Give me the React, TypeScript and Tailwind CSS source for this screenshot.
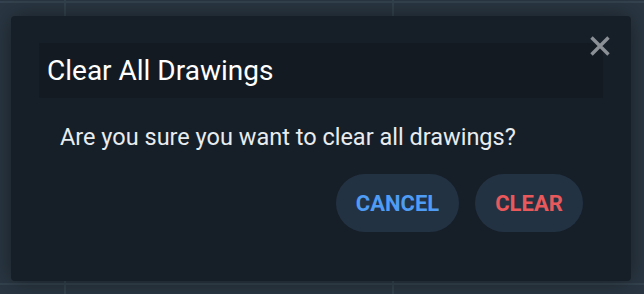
import React from "react";

export default function App() {
  return (
    <div
      className="relative w-[644px] h-[294px] overflow-hidden bg-[#2a3743]"
      style={{ fontFamily: "Roboto, 'Liberation Sans', sans-serif" }}
    >
      {/* background chart grid */}
      <div className="absolute inset-0 bg-[linear-gradient(to_right,transparent_64px,#34434f_64px,#34434f_66px,transparent_66px,transparent_392px,#34434f_392px,#34434f_394px,transparent_394px)]" />
      <div className="absolute inset-0 bg-[linear-gradient(to_bottom,transparent_1px,#34434f_1px,#34434f_3px,transparent_3px,transparent_283px,#34434f_283px,#34434f_285px,transparent_285px)]" />

      <div className="absolute left-[11px] top-[16px] w-[620px] h-[265px] rounded-[4px] bg-[#161f28] shadow-[0_0_24px_rgba(0,0,0,0.45)] flex flex-col px-[28px] pt-[27px]">
        <div className="h-[55px] bg-[#131a21] flex items-center pl-[8px]">
          <span className="text-[28px] text-white leading-none">Clear All Drawings</span>
        </div>
        <button className="absolute right-[20px] top-[19px] w-[22px] h-[22px] flex items-center justify-center">
          <svg width="22" height="22" viewBox="0 0 22 22">
            <path d="M2.5 2.5 L19.5 19.5 M19.5 2.5 L2.5 19.5" stroke="#8a9096" strokeWidth="3.4" strokeLinecap="butt" />
          </svg>
        </button>
        <div className="pl-[21px] pt-[24px] text-[23.5px] text-[#e8ecef] leading-[30px]">
          Are you sure you want to clear all drawings?
        </div>
        <div className="flex justify-end gap-[16px] pr-[20px] mt-[22px]">
          <button className="h-[58px] w-[123px] rounded-full bg-[#233243] text-[22px] font-bold text-[#4f9cf4]">
            CANCEL
          </button>
          <button className="h-[58px] w-[108px] rounded-full bg-[#233243] text-[22px] font-bold text-[#e9595b]">
            CLEAR
          </button>
        </div>
      </div>
    </div>
  );
}
